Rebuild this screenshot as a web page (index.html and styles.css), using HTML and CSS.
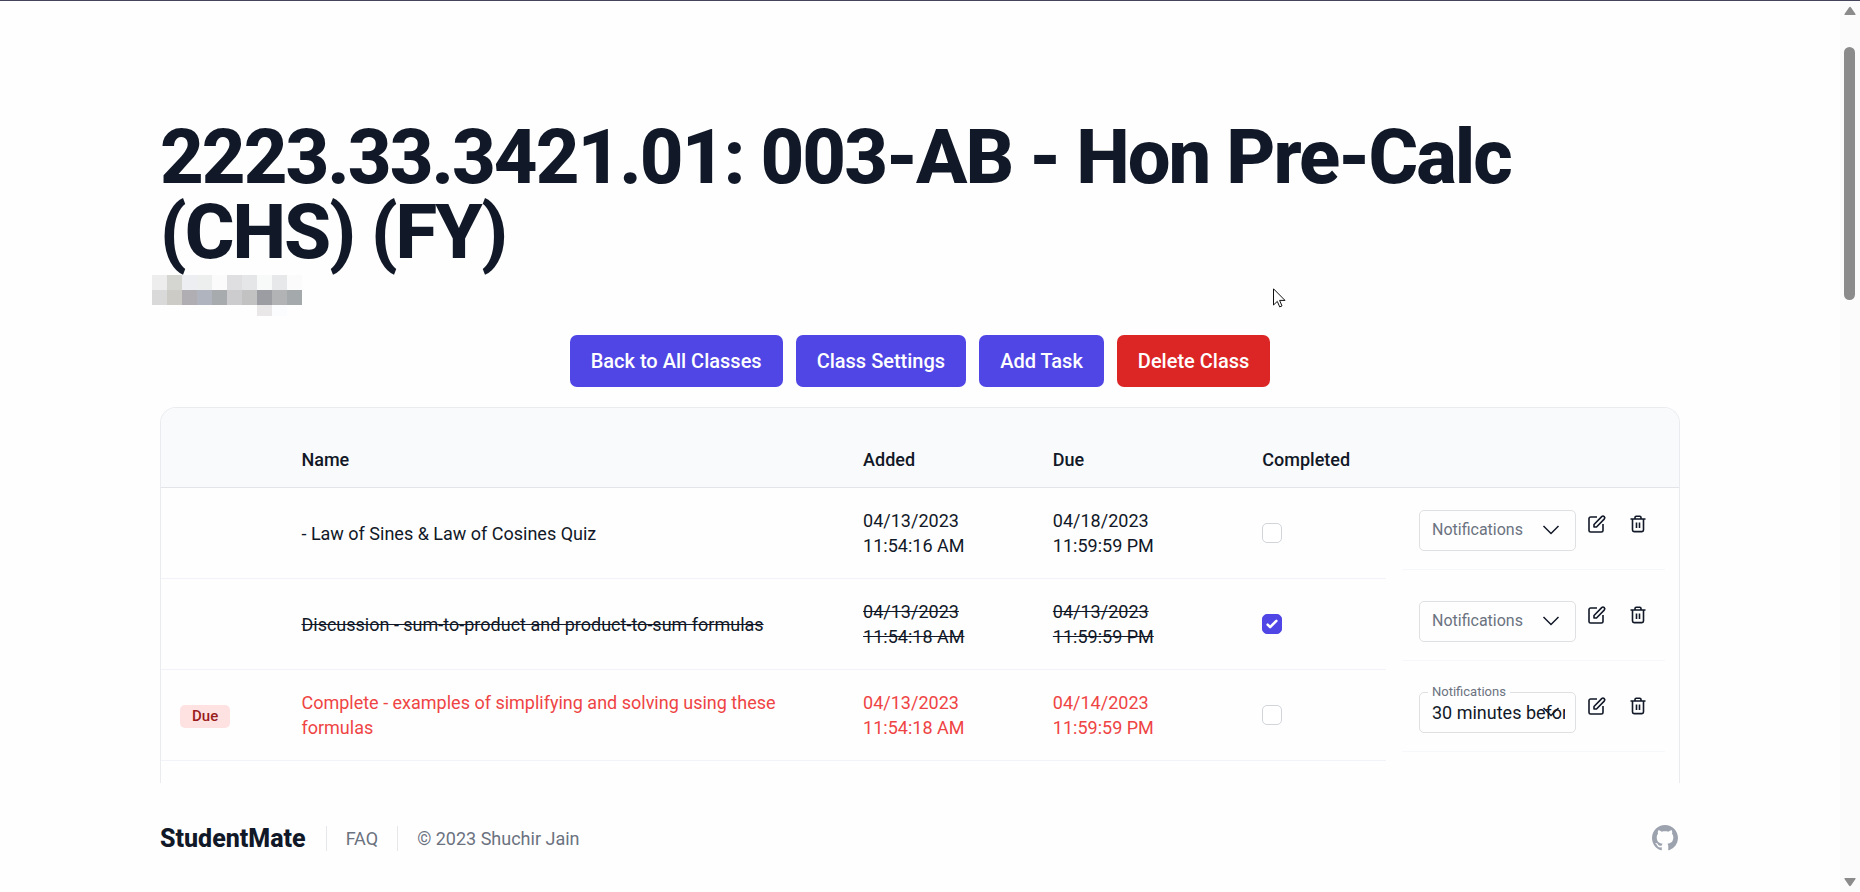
FILE: index.html
```html
<!DOCTYPE html>
<html lang="en">
<head>
  <meta charset="utf-8">
  <meta name="viewport" content="width=device-width">
  <title>StudentMate</title>
  <link rel="stylesheet" href="styles.css">
</head>
<body>
<svg class="symbols" aria-hidden="true">
  <symbol id="icon-edit" viewBox="0 0 20 20">
    <path d="M10 3H3.600A1.600 1.600 0 0 0 2 4.600V16.400A1.600 1.600 0 0 0 3.600 18H14.400A1.600 1.600 0 0 0 16 16.400V10"/>
    <path d="M7 13V10.500L14.700 2.600A1.700 1.700 0 0 1 17.200 5.100L9.500 13Z"/>
  </symbol>
  <symbol id="icon-trash" viewBox="0 0 20 20">
    <path d="M2.500 5H17.500M7 5V3.400A1.200 1.200 0 0 1 8.200 2.200H11.800A1.200 1.200 0 0 1 13 3.400V5M4.500 5V16A1.600 1.600 0 0 0 6.100 17.600H13.900A1.600 1.600 0 0 0 15.500 16V5M8.500 8.500V14M11.500 8.500V14"/>
  </symbol>
  <symbol id="icon-chevron" viewBox="0 0 20 20">
    <path d="M2.500 6L10 13.500L17.500 6"/>
  </symbol>
</svg>
<div class="page">
  <main class="container">
    <h1>2223.33.3421.01: 003-AB - Hon Pre-Calc (CHS) (FY)</h1>
    <svg class="teacher" width="150" height="41" viewBox="0 0 150 41" shape-rendering="crispEdges" aria-hidden="true">
      <path fill="#ededed" d="M0 0h15v15H0z"/>
      <path fill="#d5d5d1" d="M15 0h15v15H15z"/>
      <path fill="#edeef2" d="M30 0h15v15H30z"/>
      <path fill="#edefee" d="M45 0h15v15H45z"/>
      <path fill="#fafbfa" d="M60 0h15v15H60z"/>
      <path fill="#dfdfe2" d="M75 0h15v15H75z"/>
      <path fill="#e5e6e7" d="M90 0h15v15H90z"/>
      <path fill="#f8faf9" d="M105 0h15v15h-15z"/>
      <path fill="#e7e8e9" d="M120 0h15v15h-15z"/>
      <path fill="#fbfbfb" d="M135 0h15v15h-15z"/>
      <path fill="#d9d9d9" d="M0 15h15v15H0z"/>
      <path fill="#cccbc5" d="M15 15h15v15H15z"/>
      <path fill="#b0aeb3" d="M30 15h15v15H30z"/>
      <path fill="#b0b4be" d="M45 15h15v15H45z"/>
      <path fill="#a7abad" d="M60 15h15v15H60z"/>
      <path fill="#cccbce" d="M75 15h15v15H75z"/>
      <path fill="#c1c2c1" d="M90 15h15v15H90z"/>
      <path fill="#9c9da2" d="M105 15h15v15h-15z"/>
      <path fill="#b2b3b4" d="M120 15h15v15h-15z"/>
      <path fill="#a4a9ac" d="M135 15h15v15h-15z"/>
      <path fill="#e9e7e8" d="M105 30h15v11h-15z"/>
      <path fill="#fbfcfd" d="M120 30h15v11h-15z"/>
    </svg>
    <div class="actions">
      <button type="button" class="btn">Back to All Classes</button>
      <button type="button" class="btn">Class Settings</button>
      <button type="button" class="btn">Add Task</button>
      <button type="button" class="btn btn-danger">Delete Class</button>
    </div>
    <div class="card">
      <table class="tasks">
        <colgroup>
          <col class="col-status">
          <col class="col-name">
          <col class="col-added">
          <col class="col-due">
          <col class="col-completed">
          <col class="col-tools">
        </colgroup>
        <thead>
          <tr>
            <th></th>
            <th>Name</th>
            <th>Added</th>
            <th>Due</th>
            <th>Completed</th>
            <th></th>
          </tr>
        </thead>
        <tbody>
          <tr>
            <td></td>
            <td class="name">- Law of Sines &amp; Law of Cosines Quiz</td>
            <td>04/13/2023<br>11:54:16 AM</td>
            <td>04/18/2023<br>11:59:59 PM</td>
            <td><input type="checkbox" class="check" aria-label="Completed"></td>
            <td class="tools">
              <div class="tools-row">
                <div class="field">
                  <select id="notify-1"><option></option></select>
                  <label for="notify-1">Notifications</label>
                  <svg class="chevron"><use href="#icon-chevron"/></svg>
                </div>
                <button type="button" class="icon-btn" aria-label="Edit"><svg><use href="#icon-edit"/></svg></button>
                <button type="button" class="icon-btn" aria-label="Delete"><svg><use href="#icon-trash"/></svg></button>
              </div>
            </td>
          </tr>
          <tr class="done">
            <td></td>
            <td class="name">Discussion - sum-to-product and product-to-sum formulas</td>
            <td>04/13/2023<br>11:54:18 AM</td>
            <td>04/13/2023<br>11:59:59 PM</td>
            <td><input type="checkbox" class="check" aria-label="Completed" checked></td>
            <td class="tools">
              <div class="tools-row">
                <div class="field">
                  <select id="notify-2"><option></option></select>
                  <label for="notify-2">Notifications</label>
                  <svg class="chevron"><use href="#icon-chevron"/></svg>
                </div>
                <button type="button" class="icon-btn" aria-label="Edit"><svg><use href="#icon-edit"/></svg></button>
                <button type="button" class="icon-btn" aria-label="Delete"><svg><use href="#icon-trash"/></svg></button>
              </div>
            </td>
          </tr>
          <tr class="late">
            <td><span class="badge">Due</span></td>
            <td class="name">Complete - examples of simplifying and solving using these formulas</td>
            <td>04/13/2023<br>11:54:18 AM</td>
            <td>04/14/2023<br>11:59:59 PM</td>
            <td><input type="checkbox" class="check" aria-label="Completed"></td>
            <td class="tools">
              <div class="tools-row">
                <div class="field filled">
                  <select id="notify-3"><option>30 minutes before</option></select>
                  <label for="notify-3">Notifications</label>
                  <svg class="chevron"><use href="#icon-chevron"/></svg>
                </div>
                <button type="button" class="icon-btn" aria-label="Edit"><svg><use href="#icon-edit"/></svg></button>
                <button type="button" class="icon-btn" aria-label="Delete"><svg><use href="#icon-trash"/></svg></button>
              </div>
            </td>
          </tr>
        </tbody>
      </table>
    </div>
  </main>
  <footer class="container footer">
    <span class="brand">StudentMate</span>
    <a href="#" class="footer-item">FAQ</a>
    <span class="footer-item">© 2023 Shuchir Jain</span>
    <a href="#" class="github" aria-label="GitHub">
      <svg viewBox="0 0 16 16"><path d="M8 0C3.580 0 0 3.580 0 8c0 3.540 2.290 6.530 5.470 7.590.4.070.55-.17.55-.38 0-.19-.01-.82-.01-1.490-2.010.37-2.530-.49-2.690-.94-.09-.23-.48-.94-.82-1.130-.28-.15-.68-.52-.01-.53.63-.01 1.080.58 1.230.82.72 1.210 1.870.87 2.330.66.07-.52.28-.87.51-1.070-1.780-.2-3.640-.89-3.640-3.950 0-.87.31-1.590.82-2.150-.08-.2-.36-1.020.08-2.120 0 0 .67-.21 2.200.82.64-.18 1.320-.27 2-.27s1.360.09 2 .27c1.530-1.040 2.200-.82 2.200-.82.44 1.100.16 1.920.08 2.120.51.56.82 1.270.82 2.150 0 3.070-1.870 3.750-3.650 3.950.29.25.54.73.54 1.480 0 1.070-.01 1.930-.01 2.200 0 .21.15.46.55.38A8.010 8.010 0 0 0 16 8c0-4.420-3.580-8-8-8z"/></svg>
    </a>
  </footer>
</div>
<div class="scrollbar" aria-hidden="true">
  <svg width="12" height="9" viewBox="0 0 12 9"><path d="M5 1.500Q6 0 7 1.500L11.500 8Q12 9 11 9H1Q0 9 .5 8Z"/></svg>
  <div class="thumb"></div>
  <svg width="12" height="9" viewBox="0 0 12 9"><path d="M5 7.500Q6 9 7 7.500L11.500 1Q12 0 11 0H1Q0 0 .5 1Z"/></svg>
</div>
<svg class="cursor" width="13" height="20" viewBox="0 0 13 20" aria-hidden="true">
  <path d="M.5 .8V17L4.300 13.400L6.700 18.900L9 17.900L6.600 12.400H12Z"/>
</svg>
</body>
</html>
```
FILE: styles.css
```css
* {
  box-sizing: border-box;
}

body {
  margin: 0;
  display: flex;
  min-height: 100vh;
  border-top: 1px solid #45435c;
  background-color: #fefefe;
  color: #111827;
  font-family: Roboto, "Liberation Sans", sans-serif;
  font-size: 18px;
  line-height: 25px;
}

.symbols {
  display: none;
}

.page {
  flex: 1;
  min-width: 0;
  padding: 0 32px;
}

.container {
  max-width: 1520px;
  margin: 0 auto;
}

main.container {
  padding-top: 119px;
}

h1 {
  margin: 0;
  font-size: 76px;
  font-weight: 800;
  line-height: 75px;
  letter-spacing: -2px;
}

.teacher {
  display: block;
  margin: 5px 0 19px -8px;
}

/* buttons */
.actions {
  display: flex;
  flex-wrap: wrap;
  justify-content: center;
  gap: 13px;
  margin-bottom: 20px;
}

.btn {
  height: 52px;
  padding: 0 21px;
  border: 0;
  border-radius: 7px;
  background-color: #4f46e5;
  color: #fff;
  font-family: inherit;
  font-size: 20px;
  font-weight: 500;
}

.btn-danger {
  background-color: #dc2626;
}

/* task table */
.card {
  padding-bottom: 22px;
  border: 1px solid #e9ebef;
  border-bottom: 0;
  border-radius: 16px 16px 0 0;
  overflow: hidden;
}

.tasks {
  width: 100%;
  table-layout: fixed;
  border-collapse: separate;
  border-spacing: 0;
}

.col-status { width: 8%; }
.col-name { width: 37%; }
.col-added { width: 12.5%; }
.col-due { width: 13.8%; }
.col-completed { width: 9.4%; }
.col-tools { width: 19.3%; }

.tasks th {
  padding: 39px 19px 15px;
  border-bottom: 1px solid #e2e4e8;
  background-color: #f9fafb;
  font-weight: 500;
  text-align: left;
}

.tasks td {
  padding: 20px 19px;
  border-bottom: 1px solid #f1f3f8;
}

.tasks td.name {
  padding-right: 60px;
}

.tasks td.tools {
  padding: 0 14px 0 16px;
  border-bottom: 0;
  vertical-align: top;
}

.done {
  text-decoration: line-through;
}

.late {
  color: #ef4444;
}

.badge {
  display: inline-block;
  padding: 0 12px;
  border-radius: 5px;
  background-color: #fee2e2;
  color: #991b1b;
  font-size: 15px;
  font-weight: 500;
  line-height: 23px;
}

.check {
  display: block;
  width: 20px;
  height: 20px;
  margin: 0;
  border: 1px solid #d1d5db;
  border-radius: 5px;
  background-color: #fff;
  -webkit-appearance: none;
  appearance: none;
}

.check:checked {
  border-color: #4f46e5;
  background: #4f46e5 url("data:image/svg+xml,%3Csvg xmlns='http://www.w3.org/2000/svg' viewBox='0 0 16 16' fill='%23fff'%3E%3Cpath d='M12.207 4.793a1 1 0 0 1 0 1.414l-5 5a1 1 0 0 1-1.414 0l-2-2a1 1 0 0 1 1.414-1.414L6.500 9.086l4.293-4.293a1 1 0 0 1 1.414 0z'/%3E%3C/svg%3E") center / 20px 20px;
}

.tools-row {
  display: flex;
  align-items: flex-start;
  padding: 22px 17px 18px;
  border-bottom: 1px solid #f5f7fb;
}

/* select with floating label */
.field {
  position: relative;
  flex: 1;
  min-width: 0;
  margin-right: 11px;
}

.field select {
  display: block;
  width: 100%;
  height: 41px;
  padding: 0 10px 0 12px;
  border: 1px solid #dfe0e2;
  border-radius: 5px;
  background-color: transparent;
  color: #111827;
  font-family: inherit;
  font-size: 18px;
  -webkit-appearance: none;
  appearance: none;
}

.field label {
  position: absolute;
  top: 7px;
  left: 13px;
  color: #6b7280;
  font-size: 16px;
  line-height: 25px;
  pointer-events: none;
}

.filled label {
  top: -9px;
  left: 9px;
  padding: 0 4px;
  background-color: #fefefe;
  font-size: 13px;
  line-height: 17px;
}

.chevron {
  position: absolute;
  top: 10px;
  right: 15px;
  width: 20px;
  height: 20px;
  fill: none;
  stroke: #111827;
  stroke-width: 1.5;
  pointer-events: none;
}

.icon-btn {
  width: 20px;
  height: 20px;
  margin-top: 4px;
  padding: 0;
  border: 0;
  background: none;
}

.icon-btn + .icon-btn {
  margin-left: 21px;
}

.icon-btn svg {
  display: block;
  width: 20px;
  height: 20px;
  fill: none;
  stroke: #111827;
  stroke-width: 1.6;
  stroke-linejoin: round;
}

/* footer */
.footer {
  display: flex;
  align-items: center;
  padding: 42px 0 40px;
}

.brand {
  margin-right: 20px;
  font-size: 25px;
  font-weight: 800;
}

.footer-item {
  padding: 0 19px;
  border-left: 1px solid #e5e7eb;
  color: #6b7280;
  text-decoration: none;
}

.github {
  margin-left: auto;
  margin-right: 2px;
}

.github svg {
  display: block;
  width: 26px;
  height: 26px;
  fill: #9ca3af;
}

/* window chrome */
.scrollbar {
  display: flex;
  flex-direction: column;
  align-items: center;
  width: 20px;
  padding: 5px 1px 5px 0;
  background-color: #fbfbfb;
  fill: #8b8b8b;
}

.thumb {
  width: 11px;
  height: 253px;
  margin: 32px 0 auto;
  border-radius: 6px;
  background-color: #8b8b8b;
}

.cursor {
  position: absolute;
  top: 288px;
  left: 1273px;
  fill: #fff;
  stroke: #111;
}
```
